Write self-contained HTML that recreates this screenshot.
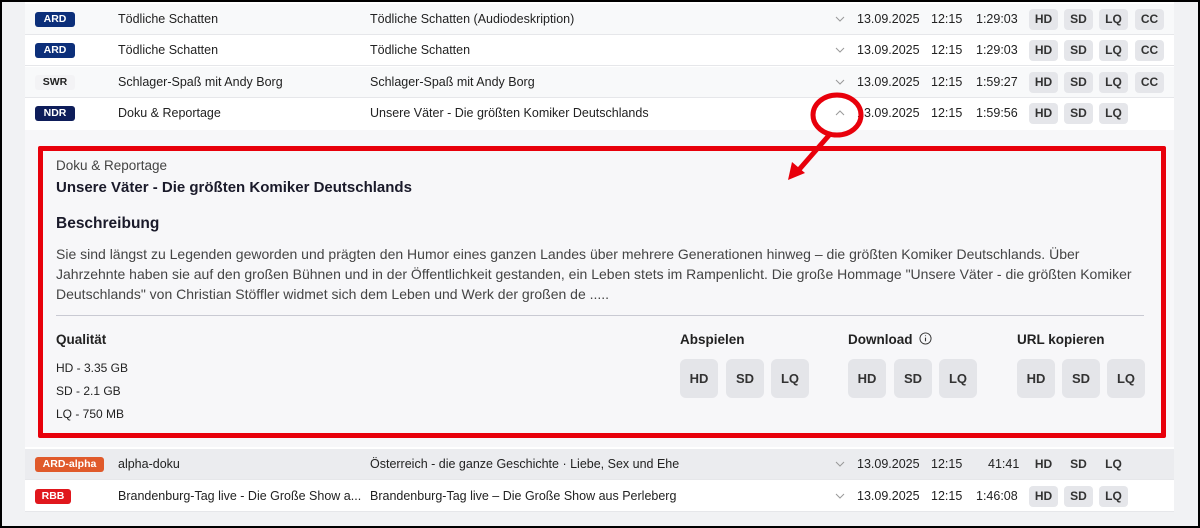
<!DOCTYPE html>
<html><head><meta charset="utf-8"><style>
*{box-sizing:border-box;margin:0;padding:0}
body{width:1200px;height:528px;overflow:hidden;background:#000;font-family:"Liberation Sans",sans-serif;position:relative}
.frame{position:absolute;left:2px;top:2px;width:1196px;height:524px;background:#f1f2f4;overflow:hidden}
.panel{position:absolute;left:23px;top:0;width:1149px;height:510px;background:#fff}
.row{position:absolute;left:23px;width:1149px;height:31px;border-bottom:1px solid #e6e7ea;font-size:12.5px;color:#222}
.row span{position:absolute;top:8px;white-space:nowrap}
.badge{position:absolute;left:10px;top:8px;height:15px;border-radius:3px;color:#fff;font-weight:bold;font-size:10.5px;line-height:15px;text-align:center}
.b{position:absolute;top:5px;width:29px;height:21px;background:#e5e6ea;border-radius:4px;font-weight:bold;font-size:12px;line-height:21px;text-align:center;color:#333}
.chev{position:absolute;left:810px;top:10px;width:10px;height:10px}
.detail{position:absolute;left:23px;top:128px;width:1149px;height:317px;background:#f7f7f9}
.red{position:absolute;left:36px;top:144px;width:1128px;height:292px;border:5px solid #e8000b;border-radius:2px}
.t{position:absolute;white-space:nowrap;color:#222}
.bb{position:absolute;top:357px;width:38px;height:39px;background:#e4e5e9;border-radius:6px;font-weight:bold;font-size:13px;line-height:39px;text-align:center;color:#333}
</style></head><body><div class="frame">
<div class="panel"></div>

<div class="row" style="top:2px;background:#f8f9fa"><div class="badge" style="width:40px;background:#0c2f7a">ARD</div><span style="left:93px">Tödliche Schatten</span><span style="left:345px">Tödliche Schatten (Audiodeskription)</span><svg class="chev" viewBox="0 0 10 10"><path d="M1 3l4 4 4-4" fill="none" stroke="#999" stroke-width="1"/></svg><span style="left:832px">13.09.2025</span><span style="left:906px">12:15</span><span style="left:951px">1:29:03</span><div class="b" style="left:1004px">HD</div><div class="b" style="left:1039px">SD</div><div class="b" style="left:1074px">LQ</div><div class="b" style="left:1110px">CC</div></div>
<div class="row" style="top:33px;background:#fff"><div class="badge" style="width:40px;background:#0c2f7a">ARD</div><span style="left:93px">Tödliche Schatten</span><span style="left:345px">Tödliche Schatten</span><svg class="chev" viewBox="0 0 10 10"><path d="M1 3l4 4 4-4" fill="none" stroke="#999" stroke-width="1"/></svg><span style="left:832px">13.09.2025</span><span style="left:906px">12:15</span><span style="left:951px">1:29:03</span><div class="b" style="left:1004px">HD</div><div class="b" style="left:1039px">SD</div><div class="b" style="left:1074px">LQ</div><div class="b" style="left:1110px">CC</div></div>
<div class="row" style="top:65px;background:#f8f9fa"><div class="badge" style="width:40px;background:#f3f3f5;color:#222">SWR</div><span style="left:93px">Schlager-Spaß mit Andy Borg</span><span style="left:345px">Schlager-Spaß mit Andy Borg</span><svg class="chev" viewBox="0 0 10 10"><path d="M1 3l4 4 4-4" fill="none" stroke="#999" stroke-width="1"/></svg><span style="left:832px">13.09.2025</span><span style="left:906px">12:15</span><span style="left:951px">1:59:27</span><div class="b" style="left:1004px">HD</div><div class="b" style="left:1039px">SD</div><div class="b" style="left:1074px">LQ</div><div class="b" style="left:1110px">CC</div></div>
<div class="row" style="top:96px;background:#fff;border:none"><div class="badge" style="width:40px;background:#0e1d5a">NDR</div><span style="left:93px">Doku &amp; Reportage</span><span style="left:345px">Unsere Väter - Die größten Komiker Deutschlands</span><svg class="chev" viewBox="0 0 10 10"><path d="M1 7l4-4 4 4" fill="none" stroke="#999" stroke-width="1"/></svg><span style="left:832px">13.09.2025</span><span style="left:906px">12:15</span><span style="left:951px">1:59:56</span><div class="b" style="left:1004px">HD</div><div class="b" style="left:1039px">SD</div><div class="b" style="left:1074px">LQ</div></div>

<div class="detail"></div>
<div class="t" style="left:54px;top:156px;font-size:13.5px;color:#444">Doku &amp; Reportage</div>
<div class="t" style="left:54px;top:177px;font-size:15px;font-weight:bold;color:#1a1a2a">Unsere Väter - Die größten Komiker Deutschlands</div>
<div class="t" style="left:54px;top:213px;font-size:15.5px;font-weight:bold;color:#1a1a2a">Beschreibung</div>
<div class="t" style="left:54px;top:242px;font-size:14px;line-height:20px;color:#444">Sie sind längst zu Legenden geworden und prägten den Humor eines ganzen Landes über mehrere Generationen hinweg – die größten Komiker Deutschlands. Über<br>Jahrzehnte haben sie auf den großen Bühnen und in der Öffentlichkeit gestanden, ein Leben stets im Rampenlicht. Die große Hommage "Unsere Väter - die größten Komiker<br>Deutschlands" von Christian Stöffler widmet sich dem Leben und Werk der großen de .....</div>
<div style="position:absolute;left:54px;top:313px;width:1088px;height:1px;background:#c9cad3"></div>
<div class="t" style="left:54px;top:330px;font-size:13.5px;font-weight:bold">Qualität</div>
<div class="t" style="left:54px;top:359px;font-size:12px">HD - 3.35 GB</div>
<div class="t" style="left:54px;top:382px;font-size:12px">SD - 2.1 GB</div>
<div class="t" style="left:54px;top:405px;font-size:12px">LQ - 750 MB</div>
<div class="t" style="left:678px;top:330px;font-size:13.5px;font-weight:bold">Abspielen</div>
<div class="t" style="left:846px;top:330px;font-size:13.5px;font-weight:bold">Download <svg width="13" height="13" viewBox="0 0 14 14" style="vertical-align:-1px;margin-left:3px"><circle cx="7" cy="7" r="6" fill="none" stroke="#333" stroke-width="1"/><path d="M7 6v4M7 3.6v.8" stroke="#333" stroke-width="1.2"/></svg></div>
<div class="t" style="left:1015px;top:330px;font-size:13.5px;font-weight:bold">URL kopieren</div>
<div class="bb" style="left:678px">HD</div><div class="bb" style="left:724px">SD</div><div class="bb" style="left:769px">LQ</div>
<div class="bb" style="left:846px">HD</div><div class="bb" style="left:892px">SD</div><div class="bb" style="left:937px">LQ</div>
<div class="bb" style="left:1015px">HD</div><div class="bb" style="left:1060px">SD</div><div class="bb" style="left:1105px">LQ</div>
<div class="red"></div>

<div class="row" style="top:447px;background:#ebecef"><div class="badge" style="width:69px;background:#e05a2b">ARD-alpha</div><span style="left:93px">alpha-doku</span><span style="left:345px">Österreich - die ganze Geschichte · Liebe, Sex und Ehe</span><svg class="chev" viewBox="0 0 10 10"><path d="M1 3l4 4 4-4" fill="none" stroke="#999" stroke-width="1"/></svg><span style="left:832px">13.09.2025</span><span style="left:906px">12:15</span><span style="left:963px">41:41</span><div class="b" style="left:1004px;background:transparent">HD</div><div class="b" style="left:1039px;background:transparent">SD</div><div class="b" style="left:1074px;background:transparent">LQ</div></div>
<div class="row" style="top:479px;background:#fff"><div class="badge" style="width:36px;background:#e0171d">RBB</div><span style="left:93px">Brandenburg-Tag live - Die Große Show a...</span><span style="left:345px">Brandenburg-Tag live – Die Große Show aus Perleberg</span><svg class="chev" viewBox="0 0 10 10"><path d="M1 3l4 4 4-4" fill="none" stroke="#999" stroke-width="1"/></svg><span style="left:832px">13.09.2025</span><span style="left:906px">12:15</span><span style="left:951px">1:46:08</span><div class="b" style="left:1004px">HD</div><div class="b" style="left:1039px">SD</div><div class="b" style="left:1074px">LQ</div></div>

<svg style="position:absolute;left:0;top:0" width="1196" height="524">
<ellipse cx="835" cy="113" rx="24" ry="20" fill="none" stroke="#e8000b" stroke-width="5"/>
<path d="M829 131L795 170" stroke="#e8000b" stroke-width="5" fill="none"/>
<path d="M786 178l4-18 13 11z" fill="#e8000b"/>
</svg>
</div></body></html>
